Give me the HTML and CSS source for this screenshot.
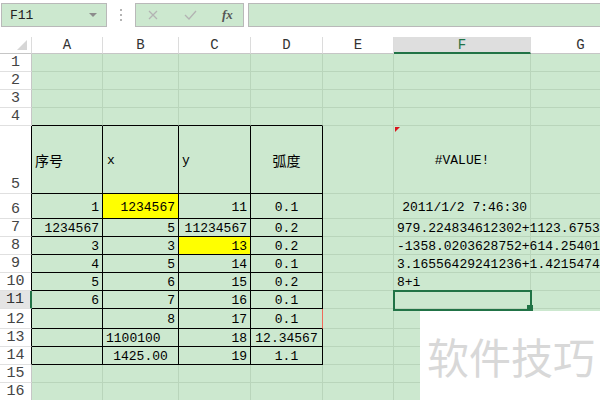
FILE: index.html
```html
<!DOCTYPE html>
<html>
<head>
<meta charset="utf-8">
<link rel="stylesheet" href="styles.css">
</head>
<body>
<div class="app">
  <div class="fbar">
    <div class="namebox"><span>F11</span><span class="caret"></span></div>
    <div class="sep"><svg width="4" height="12" viewBox="0 0 4 12"><rect x="1" y="0" width="2" height="2" fill="#b4b4b4"/><rect x="1" y="5" width="2" height="2" fill="#b4b4b4"/><rect x="1" y="10" width="2" height="2" fill="#b4b4b4"/></svg></div>
    <div class="btns">
      <svg class="ico-x" width="10" height="10" viewBox="0 0 10 10"><path d="M1 1L9 9M9 1L1 9" stroke="#b3b3b3" stroke-width="1.3" fill="none"/></svg>
      <svg class="ico-ok" width="13" height="10" viewBox="0 0 13 10"><path d="M1 5L5 9L12 1" stroke="#b3b3b3" stroke-width="1.3" fill="none"/></svg>
      <span class="fx">fx</span>
    </div>
    <div class="input"></div>
  </div>

  <div class="sheet">
    <div class="corner"><svg width="31" height="16" viewBox="0 0 31 16"><polygon points="27,3 27,13 17,13" fill="#d6d6d6"/></svg></div>
    <div class="ch">A</div><div class="ch">B</div><div class="ch">C</div><div class="ch">D</div><div class="ch">E</div><div class="ch ch-sel">F</div><div class="ch">G</div>

    <div class="rh">1</div><div class="c"></div><div class="c"></div><div class="c"></div><div class="c"></div><div class="c"></div><div class="c"></div><div class="c"></div>
    <div class="rh">2</div><div class="c"></div><div class="c"></div><div class="c"></div><div class="c"></div><div class="c"></div><div class="c"></div><div class="c"></div>
    <div class="rh">3</div><div class="c"></div><div class="c"></div><div class="c"></div><div class="c"></div><div class="c"></div><div class="c"></div><div class="c"></div>
    <div class="rh">4</div><div class="c tb"></div><div class="c tb"></div><div class="c tb"></div><div class="c tb"></div><div class="c"></div><div class="c"></div><div class="c"></div>

    <div class="rh tk">5</div><div class="c t cjk">序号</div><div class="c t x">x</div><div class="c t">y</div><div class="c t ctr cjk">弧度</div><div class="c"></div><div class="c ctr flag">#VALUE!</div><div class="c"></div>
    <div class="rh tk">6</div><div class="c t r">1</div><div class="c t r yel">1234567</div><div class="c t r">11</div><div class="c t ctr">0.1</div><div class="c"></div><div class="c r">2011/1/2 7:46:30</div><div class="c"></div>
    <div class="rh tk">7</div><div class="c t r">1234567</div><div class="c t r">5</div><div class="c t r">11234567</div><div class="c t ctr">0.2</div><div class="c"></div><div class="c ov">979.224834612302+1123.67533904i</div><div class="c"></div>
    <div class="rh tk">8</div><div class="c t r">3</div><div class="c t r">3</div><div class="c t r yel">13</div><div class="c t ctr">0.2</div><div class="c"></div><div class="c ov">-1358.0203628752+614.254013i</div><div class="c"></div>
    <div class="rh tk">9</div><div class="c t r">4</div><div class="c t r">5</div><div class="c t r">14</div><div class="c t ctr">0.1</div><div class="c"></div><div class="c ov">3.16556429241236+1.42154747i</div><div class="c"></div>
    <div class="rh tk">10</div><div class="c t r">5</div><div class="c t r">6</div><div class="c t r">15</div><div class="c t ctr">0.2</div><div class="c"></div><div class="c">8+i</div><div class="c"></div>
    <div class="rh tk rh-sel">11</div><div class="c t r">6</div><div class="c t r">7</div><div class="c t r">16</div><div class="c t ctr">0.1</div><div class="c"></div><div class="c sel"></div><div class="c"></div>
    <div class="rh tk">12</div><div class="c t"></div><div class="c t r">8</div><div class="c t r">17</div><div class="c t ctr redr">0.1</div><div class="c"></div><div class="c"></div><div class="c"></div>
    <div class="rh tk">13</div><div class="c t"></div><div class="c t">1100100</div><div class="c t r">18</div><div class="c t ctr">12.34567</div><div class="c"></div><div class="c"></div><div class="c"></div>
    <div class="rh tk">14</div><div class="c t"></div><div class="c t ctr">1425.00</div><div class="c t r">19</div><div class="c t ctr">1.1</div><div class="c"></div><div class="c"></div><div class="c"></div>
    <div class="rh">15</div><div class="c"></div><div class="c"></div><div class="c"></div><div class="c"></div><div class="c"></div><div class="c"></div><div class="c"></div>
    <div class="rh">16</div><div class="c"></div><div class="c"></div><div class="c"></div><div class="c"></div><div class="c"></div><div class="c"></div><div class="c"></div>
  </div>

  <div class="wm">软件技巧</div>
</div>
</body>
</html>
```

FILE: styles.css
```css
html, body {
  margin: 0;
  padding: 0;
  background: #fff;
}
body {
  width: 600px;
  height: 400px;
  overflow: hidden;
  font-family: "Liberation Mono", "Noto Sans CJK SC", monospace;
}
.app {
  position: relative;
  width: 600px;
  height: 400px;
  overflow: hidden;
}

/* formula bar */
.fbar {
  display: flex;
  align-items: flex-start;
  height: 37px;
  padding-top: 3px;
  box-sizing: border-box;
}
.namebox {
  margin-left: 1px;
  width: 106px;
  height: 24px;
  box-sizing: border-box;
  border: 1px solid #b9b9b9;
  background: #cce8cf;
  display: flex;
  align-items: center;
  justify-content: space-between;
  padding: 0 9px 0 8px;
  font-size: 13px;
  color: #222;
}
.caret {
  width: 0;
  height: 0;
  border-left: 4px solid transparent;
  border-right: 4px solid transparent;
  border-top: 4px solid #8c8c8c;
}
.sep {
  width: 28px;
  height: 24px;
  display: flex;
  align-items: center;
  justify-content: center;
}
.btns {
  width: 109px;
  height: 24px;
  box-sizing: border-box;
  border: 1px solid #b9b9b9;
  background: #cce8cf;
  display: flex;
  align-items: center;
  padding-left: 12px;
}
.ico-ok {
  margin-left: 26px;
}
.fx {
  margin-left: 25px;
  font-family: "Liberation Serif", serif;
  font-style: italic;
  font-weight: bold;
  font-size: 13px;
  color: #555;
}
.input {
  flex: 1;
  margin-left: 4px;
  margin-right: -3px;
  height: 24px;
  box-sizing: border-box;
  border: 1px solid #b9b9b9;
  background: #cce8cf;
}

/* sheet grid */
.sheet {
  display: grid;
  grid-template-columns: 32px 71px 76px 72px 72px 71px 137px 100px;
  grid-template-rows: 17px 18px 18px 18px 18px 68px 25px 18px 18px 18px 18px 18px 20px 18px 18px 18px 18px;
}
.corner {
  background: #fff;
  border-right: 1px solid #dcdcdc;
  border-bottom: 1px solid #c6c6c6;
  box-sizing: border-box;
}
.corner svg {
  display: block;
}
.ch {
  background: #fff;
  border-right: 1px solid #dcdcdc;
  border-bottom: 1px solid #c6c6c6;
  box-sizing: border-box;
  display: flex;
  align-items: center;
  justify-content: center;
  font-size: 14px;
  color: #333;
}
.ch-sel {
  background: #dedede;
  color: #217346;
  border-bottom: 2px solid #217346;
}
.rh {
  background: #fff;
  border-right: 1px solid #c6c6c6;
  border-bottom: 1px solid #e0e0e0;
  box-sizing: border-box;
  display: flex;
  align-items: flex-end;
  justify-content: center;
  padding-bottom: 0;
  font-size: 15px;
  line-height: 17px;
  color: #444;
}
.rh.tk {
  border-right-color: #000;
}
.rh.rh-sel {
  background: #e4e4e4;
  border-right: 2px solid #217346;
  color: #333;
}
.c {
  background: #cce8cf;
  border-right: 1px solid #b9d5bb;
  border-bottom: 1px solid #b9d5bb;
  box-sizing: border-box;
  display: flex;
  align-items: center;
  padding: 2px 3px 0;
  font-size: 13px;
  color: #000;
  white-space: nowrap;
  min-width: 0;
}
.c.t {
  border-right-color: #000;
  border-bottom-color: #000;
}
.c.tb {
  border-bottom-color: #000;
}
.c.r {
  justify-content: flex-end;
}
.c.ctr {
  justify-content: center;
}
.c.cjk {
  font-size: 14px;
  padding-top: 0;
}
.c.x {
  padding-left: 4px;
}
.c.yel {
  background: #ffff00;
}
.c.redr {
  border-right-color: #ef6b5b;
}
.c.ov {
  position: relative;
  z-index: 1;
}
.flag {
  position: relative;
}
.flag::before {
  content: "";
  position: absolute;
  left: 1px;
  top: 1px;
  border-top: 5px solid #d9141c;
  border-right: 5px solid transparent;
}
.sel {
  position: relative;
  z-index: 2;
}
.sel::after {
  content: "";
  position: absolute;
  left: -1px;
  top: -1px;
  right: -2px;
  bottom: -3px;
  border: 2px solid #217346;
}
.sel::before {
  content: "";
  position: absolute;
  right: -3px;
  bottom: -3px;
  width: 6px;
  height: 6px;
  background: #217346;
  z-index: 1;
}

/* watermark */
.wm {
  position: absolute;
  z-index: 3;
  left: 420px;
  top: 311px;
  width: 180px;
  height: 89px;
  box-sizing: border-box;
  background: #fff;
  padding-left: 7px;
  display: flex;
  align-items: center;
  font-family: "Noto Sans CJK SC", sans-serif;
  font-size: 42px;
  line-height: 1;
  color: #d8d8d8;
  white-space: nowrap;
}
```
